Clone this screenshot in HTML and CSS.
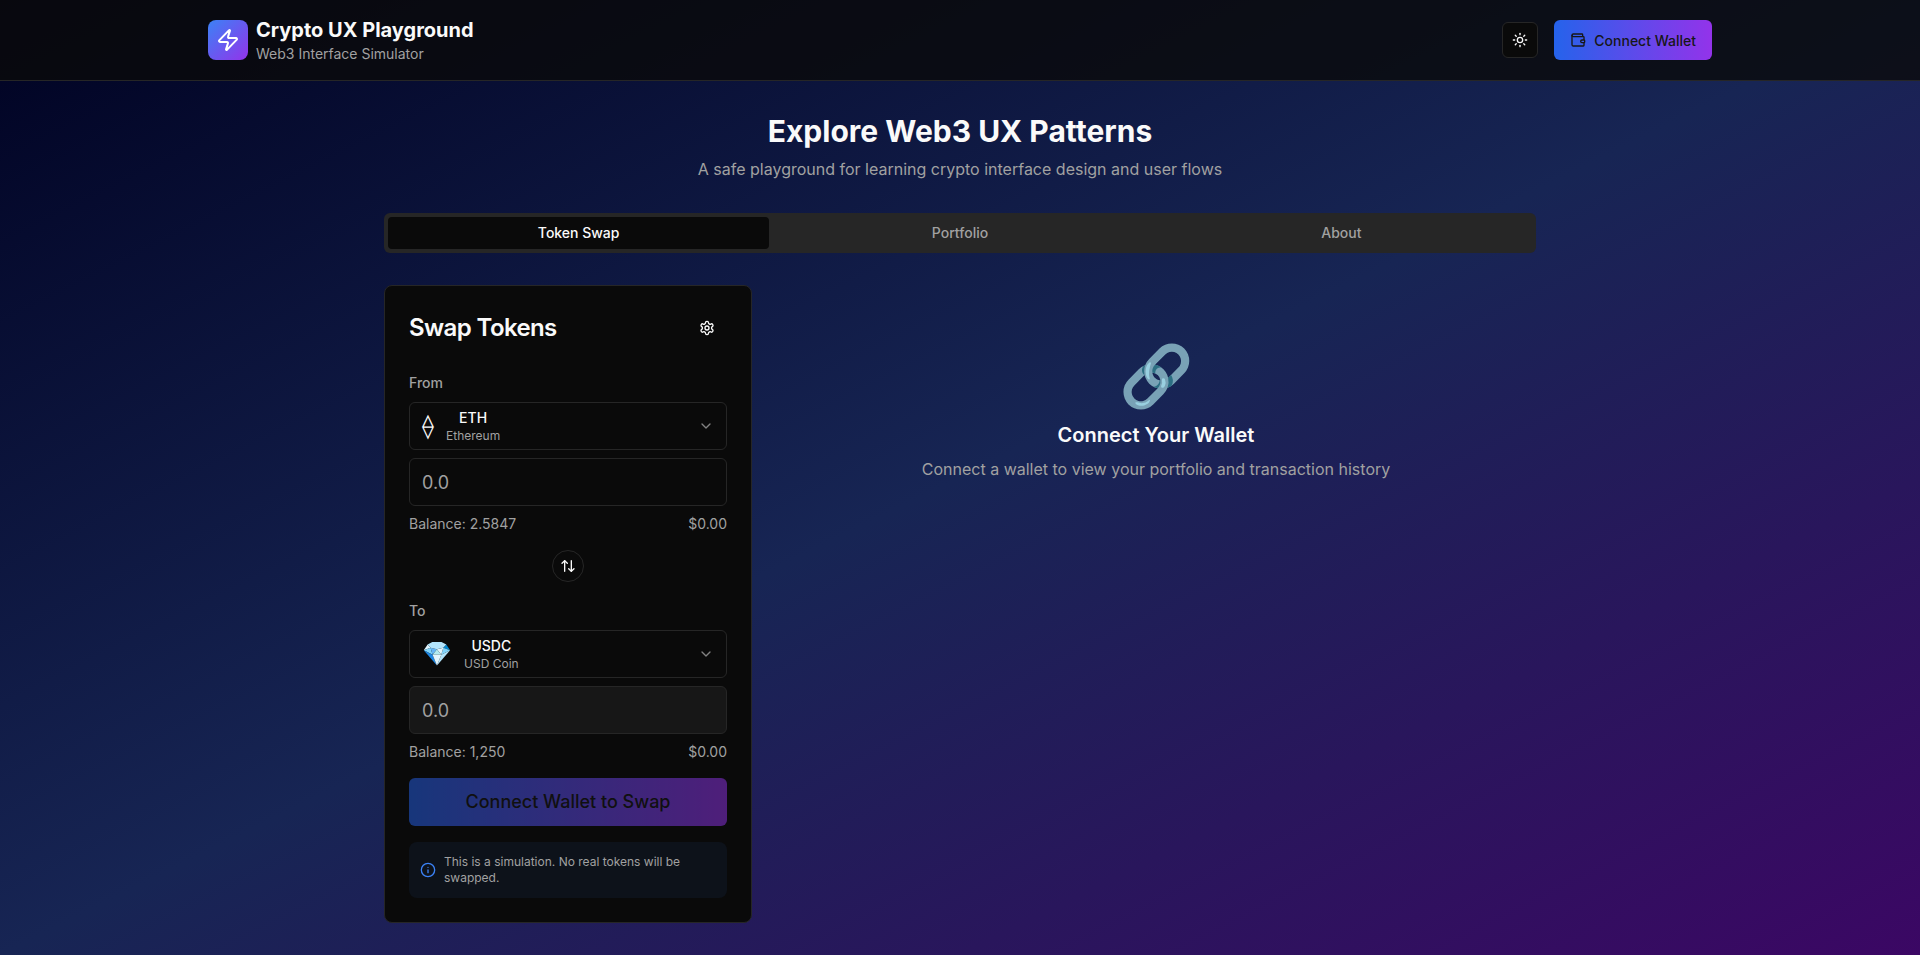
FILE: index.html
```html
<!DOCTYPE html>
<html lang="en">
<head>
    <meta charset="UTF-8">
    <meta name="viewport" content="width=device-width, initial-scale=1.0">
    <title>Crypto UX Playground</title>
    <link rel="stylesheet" href="styles.css">
</head>
<body>
    <header class="header">
        <div class="header-inner">
            <div class="brand">
                <div class="brand-logo">
                    <svg class="icon icon-24" viewBox="0 0 24 24"><path d="M4 14a1 1 0 0 1-.78-1.63l9.9-10.2a.5.5 0 0 1 .86.46l-1.92 6.02A1 1 0 0 0 13 10h7a1 1 0 0 1 .78 1.63l-9.9 10.2a.5.5 0 0 1-.86-.46l1.92-6.02A1 1 0 0 0 11 14z"/></svg>
                </div>
                <div>
                    <h1 class="brand-title">Crypto UX Playground</h1>
                    <p class="brand-sub">Web3 Interface Simulator</p>
                </div>
            </div>
            <div class="header-actions">
                <button class="theme-btn">
                    <svg class="icon icon-16" viewBox="0 0 24 24"><circle cx="12" cy="12" r="4"/><path d="M12 2v2"/><path d="M12 20v2"/><path d="m4.93 4.93 1.41 1.41"/><path d="m17.66 17.66 1.41 1.41"/><path d="M2 12h2"/><path d="M20 12h2"/><path d="m6.34 17.66-1.41 1.41"/><path d="m19.07 4.93-1.41 1.41"/></svg>
                </button>
                <button class="wallet-btn">
                    <svg class="icon icon-16" viewBox="0 0 24 24"><path d="M19 7V4a1 1 0 0 0-1-1H5a2 2 0 0 0 0 4h15a1 1 0 0 1 1 1v4h-3a2 2 0 0 0 0 4h3a1 1 0 0 0 1-1v-2a1 1 0 0 0-1-1"/><path d="M3 5v14a2 2 0 0 0 2 2h15a1 1 0 0 0 1-1v-4"/></svg>
                    Connect Wallet
                </button>
            </div>
        </div>
    </header>

    <main class="main">
        <div class="hero">
            <h2>Explore Web3 UX Patterns</h2>
            <p>A safe playground for learning crypto interface design and user flows</p>
        </div>

        <div class="tabs">
            <button class="tab active">Token Swap</button>
            <button class="tab">Portfolio</button>
            <button class="tab">About</button>
        </div>

        <div class="panels">
            <section class="swap-card">
                <div class="swap-head">
                    <h3>Swap Tokens</h3>
                    <button class="ghost-btn">
                        <svg class="icon icon-16" viewBox="0 0 24 24"><path d="M12.22 2h-.44a2 2 0 0 0-2 2v.18a2 2 0 0 1-1 1.73l-.43.25a2 2 0 0 1-2 0l-.15-.08a2 2 0 0 0-2.73.73l-.22.38a2 2 0 0 0 .73 2.73l.15.1a2 2 0 0 1 1 1.72v.51a2 2 0 0 1-1 1.74l-.15.09a2 2 0 0 0-.73 2.73l.22.38a2 2 0 0 0 2.73.73l.15-.08a2 2 0 0 1 2 0l.43.25a2 2 0 0 1 1 1.73V20a2 2 0 0 0 2 2h.44a2 2 0 0 0 2-2v-.18a2 2 0 0 1 1-1.73l.43-.25a2 2 0 0 1 2 0l.15.08a2 2 0 0 0 2.73-.73l.22-.39a2 2 0 0 0-.73-2.73l-.15-.08a2 2 0 0 1-1-1.74v-.5a2 2 0 0 1 1-1.74l.15-.09a2 2 0 0 0 .73-2.73l-.22-.38a2 2 0 0 0-2.73-.73l-.15.08a2 2 0 0 1-2 0l-.43-.25a2 2 0 0 1-1-1.73V4a2 2 0 0 0-2-2z"/><circle cx="12" cy="12" r="3"/></svg>
                    </button>
                </div>

                <div class="token-group">
                    <label class="field-label">From</label>
                    <button class="token-select">
                        <span class="token-icon">⟠</span>
                        <span class="token-name">
                            <span class="token-symbol">ETH</span>
                            <span class="token-full">Ethereum</span>
                        </span>
                        <svg class="icon icon-16 chevron" viewBox="0 0 24 24"><path d="m6 9 6 6 6-6"/></svg>
                    </button>
                    <input class="amount" type="text" placeholder="0.0">
                    <div class="balance-row">
                        <span>Balance: 2.5847</span>
                        <span>$0.00</span>
                    </div>
                </div>

                <div class="flip-row">
                    <button class="flip-btn">
                        <svg class="icon icon-16" viewBox="0 0 24 24"><path d="m21 16-4 4-4-4"/><path d="M17 20V4"/><path d="m3 8 4-4 4 4"/><path d="M7 4v16"/></svg>
                    </button>
                </div>

                <div class="token-group">
                    <label class="field-label">To</label>
                    <button class="token-select">
                        <span class="token-icon">💎</span>
                        <span class="token-name">
                            <span class="token-symbol">USDC</span>
                            <span class="token-full">USD Coin</span>
                        </span>
                        <svg class="icon icon-16 chevron" viewBox="0 0 24 24"><path d="m6 9 6 6 6-6"/></svg>
                    </button>
                    <input class="amount amount-readonly" type="text" placeholder="0.0" readonly>
                    <div class="balance-row">
                        <span>Balance: 1,250</span>
                        <span>$0.00</span>
                    </div>
                </div>

                <button class="swap-btn" disabled>Connect Wallet to Swap</button>

                <div class="sim-note">
                    <svg class="icon icon-16 note-icon" viewBox="0 0 24 24"><circle cx="12" cy="12" r="10"/><path d="M12 16v-4"/><path d="M12 8h.01"/></svg>
                    <p>This is a simulation. No real tokens will be swapped.</p>
                </div>
            </section>

            <section class="connect-panel">
                <div class="connect-emoji">🔗</div>
                <h3>Connect Your Wallet</h3>
                <p>Connect a wallet to view your portfolio and transaction history</p>
            </section>
        </div>
    </main>
</body>
</html>
```

FILE: styles.css
```css
* {
    margin: 0;
    padding: 0;
    box-sizing: border-box;
}

body {
    font-family: Inter, "Noto Sans", sans-serif;
    min-height: 955px;
    background: linear-gradient(to bottom right, #000222 0%, #172554 50%, #3b0764 100%);
    color: #fafafa;
    line-height: 1.5;
}

button {
    font-family: inherit;
    border: none;
    background: none;
    color: inherit;
}

.icon {
    fill: none;
    stroke: currentColor;
    stroke-width: 2;
    stroke-linecap: round;
    stroke-linejoin: round;
    flex-shrink: 0;
}

.icon-16 {
    width: 16px;
    height: 16px;
}

.icon-24 {
    width: 24px;
    height: 24px;
}

/* header */
.header {
    height: 81px;
    background: rgba(10, 10, 10, 0.8);
    border-bottom: 1px solid #262626;
}

.header-inner {
    max-width: 1536px;
    height: 80px;
    margin: 0 auto;
    padding: 0 16px;
    display: flex;
    align-items: center;
    justify-content: space-between;
}

.brand {
    display: flex;
    align-items: center;
    gap: 8px;
}

.brand-logo {
    width: 40px;
    height: 40px;
    border-radius: 8px;
    background: linear-gradient(to bottom right, #3b82f6, #9333ea);
    display: flex;
    align-items: center;
    justify-content: center;
    color: white;
}

.brand-title {
    font-size: 20px;
    line-height: 28px;
    font-weight: 700;
}

.brand-sub {
    font-size: 14px;
    line-height: 20px;
    color: #a1a1a1;
}

.header-actions {
    display: flex;
    align-items: center;
    gap: 16px;
}

.theme-btn {
    width: 36px;
    height: 36px;
    border-radius: 6px;
    border: 1px solid #262626;
    background: #0a0a0a;
    display: flex;
    align-items: center;
    justify-content: center;
}

.wallet-btn {
    height: 40px;
    padding: 0 16px;
    border-radius: 6px;
    background: linear-gradient(to right, #2563eb, #9333ea);
    color: #171717;
    font-size: 14px;
    font-weight: 500;
    display: flex;
    align-items: center;
    gap: 8px;
}

/* page */
.main {
    max-width: 1152px;
    margin: 0 auto;
    padding-top: 32px;
}

.hero {
    text-align: center;
    margin-bottom: 32px;
}

.hero h2 {
    font-size: 30px;
    line-height: 36px;
    font-weight: 700;
    margin-bottom: 8px;
}

.hero p {
    font-size: 16px;
    line-height: 24px;
    color: #a1a1a1;
}

.tabs {
    height: 40px;
    padding: 4px;
    border-radius: 6px;
    background: #262626;
    display: grid;
    grid-template-columns: repeat(3, 1fr);
    margin-bottom: 32px;
}

.tab {
    border-radius: 4px;
    padding-bottom: 1px;
    font-size: 14px;
    font-weight: 500;
    color: #a1a1a1;
}

.tab.active {
    background: #0a0a0a;
    color: #fafafa;
}

.panels {
    display: grid;
    grid-template-columns: repeat(3, 1fr);
    gap: 24px;
    align-items: start;
}

/* swap card */
.swap-card {
    background: #0a0a0a;
    border: 1px solid #262626;
    border-radius: 8px;
    padding: 24px;
}

.swap-head {
    height: 36px;
    margin-bottom: 27px;
    display: flex;
    align-items: center;
    justify-content: space-between;
}

.swap-head h3 {
    font-size: 24px;
    line-height: 32px;
    font-weight: 600;
    letter-spacing: -0.6px;
}

.ghost-btn {
    width: 40px;
    height: 36px;
    display: flex;
    align-items: center;
    justify-content: center;
}

.field-label {
    display: block;
    font-size: 14px;
    line-height: 20px;
    font-weight: 500;
    color: #a1a1a1;
    margin-bottom: 9px;
}

.token-select {
    width: 100%;
    height: 48px;
    padding: 0 12px;
    border: 1px solid #262626;
    border-radius: 6px;
    display: flex;
    align-items: center;
    gap: 12px;
    margin-bottom: 8px;
}

.token-icon {
    font-size: 24px;
    line-height: 32px;
}

.token-name {
    display: flex;
    flex-direction: column;
    align-items: center;
}

.token-symbol {
    font-size: 14px;
    line-height: 20px;
    font-weight: 500;
}

.token-full {
    font-size: 12px;
    line-height: 16px;
    color: #a1a1a1;
}

.chevron {
    margin-left: auto;
    opacity: 0.5;
}

.amount {
    display: block;
    width: 100%;
    height: 48px;
    padding: 0 12px;
    border: 1px solid #262626;
    border-radius: 6px;
    background: transparent;
    color: #fafafa;
    font-family: inherit;
    font-size: 18px;
    outline: none;
}

.amount::placeholder {
    color: #a1a1a1;
    opacity: 1;
}

.amount-readonly {
    background: #171717;
}

.balance-row {
    margin-top: 8px;
    display: flex;
    justify-content: space-between;
    font-size: 14px;
    line-height: 20px;
    color: #a1a1a1;
}

.flip-row {
    display: flex;
    justify-content: center;
    margin: 16px 0 19px;
}

.flip-btn {
    width: 32px;
    height: 32px;
    border-radius: 50%;
    border: 1px solid #262626;
    display: flex;
    align-items: center;
    justify-content: center;
}

.swap-btn {
    width: 100%;
    height: 48px;
    margin-top: 16px;
    padding-bottom: 1px;
    border-radius: 6px;
    background: linear-gradient(to right, #2563eb, #9333ea);
    color: #171717;
    font-size: 18px;
    font-weight: 500;
    opacity: 0.5;
}

.sim-note {
    margin-top: 16px;
    padding: 12px 12px 12px 11px;
    border-radius: 8px;
    background: rgba(59, 130, 246, 0.07);
    display: flex;
    align-items: center;
    gap: 8px;
}

.sim-note p {
    font-size: 12px;
    line-height: 16px;
    color: #a1a1a1;
}

.note-icon {
    color: #3b82f6;
}

/* right side */
.connect-panel {
    grid-column: span 2;
    padding-top: 60px;
    text-align: center;
}

.connect-emoji {
    font-size: 60px;
    line-height: 60px;
    opacity: 0.9;
    margin-bottom: 16px;
}

.connect-panel h3 {
    font-size: 20px;
    line-height: 28px;
    font-weight: 600;
    margin-bottom: 8px;
}

.connect-panel p {
    font-size: 16px;
    line-height: 24px;
    color: #a1a1a1;
}
```
